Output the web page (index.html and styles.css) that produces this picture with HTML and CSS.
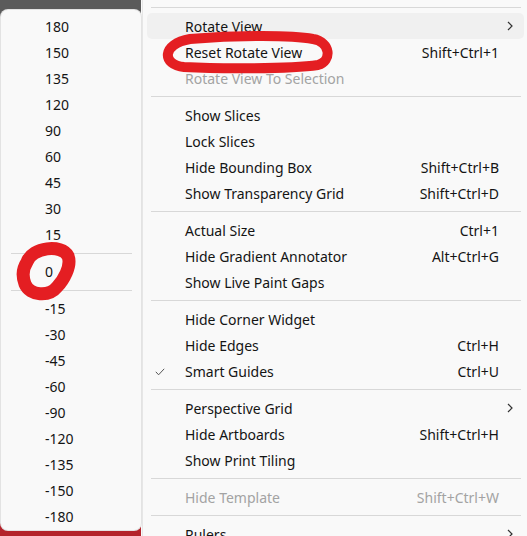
FILE: index.html
```html
<!DOCTYPE html>
<html>
<head>
<meta charset="utf-8">
<link rel="stylesheet" href="styles.css">
</head>
<body>
<div class="screen">
  <div class="left-pane">
    <div class="angle-menu">
      <div class="a-item">180</div>
      <div class="a-item">150</div>
      <div class="a-item">135</div>
      <div class="a-item">120</div>
      <div class="a-item">90</div>
      <div class="a-item">60</div>
      <div class="a-item">45</div>
      <div class="a-item">30</div>
      <div class="a-item">15</div>
      <div class="a-sep"></div>
      <div class="a-item">0</div>
      <div class="a-sep"></div>
      <div class="a-item">-15</div>
      <div class="a-item">-30</div>
      <div class="a-item">-45</div>
      <div class="a-item">-60</div>
      <div class="a-item">-90</div>
      <div class="a-item">-120</div>
      <div class="a-item">-135</div>
      <div class="a-item">-150</div>
      <div class="a-item">-180</div>
    </div>
  </div>
  <div class="view-menu">
    <div class="sep"></div>
    <div class="item hover"><span class="label">Rotate View</span><span class="key"></span><span class="sub"><svg width="6" height="10" viewBox="0 0 6 10"><polyline points="1,1 5,5 1,9" fill="none" stroke="#333" stroke-width="1.2"/></svg></span></div>
    <div class="item"><span class="label">Reset Rotate View</span><span class="key">Shift+Ctrl+1</span><span class="sub"></span></div>
    <div class="item disabled"><span class="label">Rotate View To Selection</span><span class="key"></span><span class="sub"></span></div>
    <div class="sep"></div>
    <div class="item"><span class="label">Show Slices</span><span class="key"></span><span class="sub"></span></div>
    <div class="item"><span class="label">Lock Slices</span><span class="key"></span><span class="sub"></span></div>
    <div class="item"><span class="label">Hide Bounding Box</span><span class="key">Shift+Ctrl+B</span><span class="sub"></span></div>
    <div class="item"><span class="label">Show Transparency Grid</span><span class="key">Shift+Ctrl+D</span><span class="sub"></span></div>
    <div class="sep"></div>
    <div class="item"><span class="label">Actual Size</span><span class="key">Ctrl+1</span><span class="sub"></span></div>
    <div class="item"><span class="label">Hide Gradient Annotator</span><span class="key">Alt+Ctrl+G</span><span class="sub"></span></div>
    <div class="item"><span class="label">Show Live Paint Gaps</span><span class="key"></span><span class="sub"></span></div>
    <div class="sep"></div>
    <div class="item"><span class="label">Hide Corner Widget</span><span class="key"></span><span class="sub"></span></div>
    <div class="item"><span class="label">Hide Edges</span><span class="key">Ctrl+H</span><span class="sub"></span></div>
    <div class="item"><span class="check"><svg width="10" height="8" viewBox="0 0 10 8"><polyline points="0.8,3.8 3.6,6.8 9.2,0.8" fill="none" stroke="#555" stroke-width="1"/></svg></span><span class="label">Smart Guides</span><span class="key">Ctrl+U</span><span class="sub"></span></div>
    <div class="sep"></div>
    <div class="item"><span class="label">Perspective Grid</span><span class="key"></span><span class="sub"><svg width="6" height="10" viewBox="0 0 6 10"><polyline points="1,1 5,5 1,9" fill="none" stroke="#333" stroke-width="1.2"/></svg></span></div>
    <div class="item"><span class="label">Hide Artboards</span><span class="key">Shift+Ctrl+H</span><span class="sub"></span></div>
    <div class="item"><span class="label">Show Print Tiling</span><span class="key"></span><span class="sub"></span></div>
    <div class="sep"></div>
    <div class="item disabled"><span class="label">Hide Template</span><span class="key">Shift+Ctrl+W</span><span class="sub"></span></div>
    <div class="sep"></div>
    <div class="item"><span class="label">Rulers</span><span class="key"></span><span class="sub"><svg width="6" height="10" viewBox="0 0 6 10"><polyline points="1,1 5,5 1,9" fill="none" stroke="#333" stroke-width="1.2"/></svg></span></div>
  </div>
  <svg class="marks" width="527" height="536" viewBox="0 0 527 536">
    <path d="M190 39 C240 35 292 35 313 39 C331 42 332 61 318 65 C290 69 220 69 184 67 C162 65 161 44 190 39 Z" fill="none" stroke="#e41e22" stroke-width="10" stroke-linejoin="round"/>
    <path d="M27 262 C32 247 62 244 68 256 C72 266 63 281 57 287 C49 297 30 296 25 284 C22 276 23 268 27 262 Z" fill="none" stroke="#e41e22" stroke-width="13" stroke-linejoin="round"/>
  </svg>
</div>
</body>
</html>
```
FILE: styles.css
```css
html, body {
  margin: 0;
  padding: 0;
}
body {
  width: 527px;
  height: 536px;
  overflow: hidden;
  background: #f9f9f9;
  font-family: "Noto Sans", "Open Sans", sans-serif;
  font-size: 14px;
  color: #141414;
}
.screen {
  position: relative;
  display: flex;
  width: 527px;
  height: 536px;
  overflow: hidden;
}
.left-pane {
  width: 141px;
  flex: none;
  padding: 10px 0 0 1px;
  box-sizing: border-box;
  background: linear-gradient(#5b5b5b 0, #5b5b5b 50%, #b3232b 50%, #b3232b 100%);
}
.angle-menu {
  height: 520px;
  box-sizing: border-box;
  padding-top: 4px;
  background: #f9f9f9;
  border-radius: 7px;
  box-shadow: 0 0 0 1px #e3e3e3;
  overflow: hidden;
}
.a-item {
  height: 26px;
  line-height: 26px;
  padding-left: 44px;
}
.a-sep {
  height: 1px;
  background: #d8d8d8;
  margin: 5px 9px 5px 10px;
}
.view-menu {
  flex: 1;
  background: #f9f9f9;
  border-left: 1px solid #e6e6e6;
  margin-left: 1px;
  padding-top: 2px;
}
.sep {
  height: 1px;
  background: #d8d8d8;
  margin: 5px 6px 5px 8px;
}
.item {
  position: relative;
  display: flex;
  align-items: center;
  height: 26px;
  margin: 0 3px 0 4px;
  padding-left: 38px;
  border-radius: 5px;
}
.item.hover {
  background: #f0f0f0;
}
.item.disabled {
  color: #a3a3a3;
}
.label {
  flex: 1;
  white-space: nowrap;
}
.key {
  white-space: nowrap;
}
.sub {
  width: 25px;
  flex: none;
  display: flex;
  align-items: center;
  padding-left: 8px;
  box-sizing: border-box;
}
.sub svg {
  display: block;
}
.check {
  position: absolute;
  left: 8px;
  top: 10px;
}
.check svg {
  display: block;
}
.marks {
  position: absolute;
  left: 0;
  top: 0;
  pointer-events: none;
}
```
